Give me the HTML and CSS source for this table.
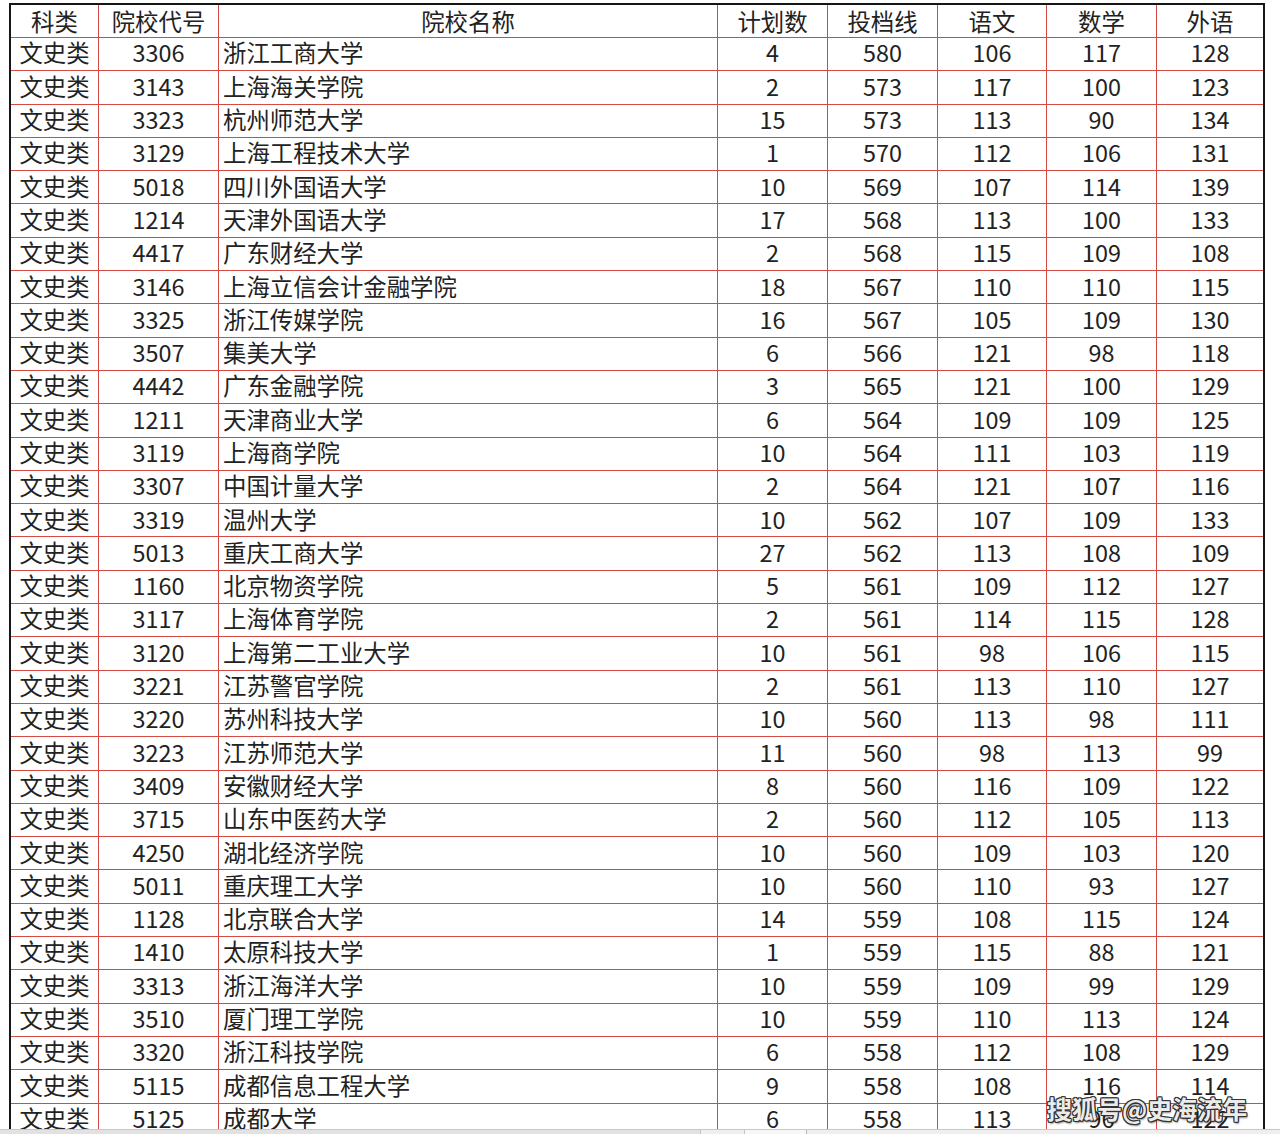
FILE: index.html
```html
<!DOCTYPE html>
<html lang="zh-CN">
<head>
<meta charset="utf-8">
<title>文史类 投档线</title>
<link rel="stylesheet" href="styles.css">
</head>
<body>
<div class="page">
  <div class="viewport">
    <div class="sheet">
      <div class="row head">
        <div class="c">科类</div><div class="c">院校代号</div><div class="c">院校名称</div><div class="c">计划数</div><div class="c">投档线</div><div class="c">语文</div><div class="c">数学</div><div class="c last">外语</div>
      </div>
      <div class="row"><div class="c">文史类</div><div class="c">3306</div><div class="c name">浙江工商大学</div><div class="c">4</div><div class="c">580</div><div class="c">106</div><div class="c">117</div><div class="c last">128</div></div>
      <div class="row"><div class="c">文史类</div><div class="c">3143</div><div class="c name">上海海关学院</div><div class="c">2</div><div class="c">573</div><div class="c">117</div><div class="c">100</div><div class="c last">123</div></div>
      <div class="row"><div class="c">文史类</div><div class="c">3323</div><div class="c name">杭州师范大学</div><div class="c">15</div><div class="c">573</div><div class="c">113</div><div class="c">90</div><div class="c last">134</div></div>
      <div class="row"><div class="c">文史类</div><div class="c">3129</div><div class="c name">上海工程技术大学</div><div class="c">1</div><div class="c">570</div><div class="c">112</div><div class="c">106</div><div class="c last">131</div></div>
      <div class="row"><div class="c">文史类</div><div class="c">5018</div><div class="c name">四川外国语大学</div><div class="c">10</div><div class="c">569</div><div class="c">107</div><div class="c">114</div><div class="c last">139</div></div>
      <div class="row"><div class="c">文史类</div><div class="c">1214</div><div class="c name">天津外国语大学</div><div class="c">17</div><div class="c">568</div><div class="c">113</div><div class="c">100</div><div class="c last">133</div></div>
      <div class="row"><div class="c">文史类</div><div class="c">4417</div><div class="c name">广东财经大学</div><div class="c">2</div><div class="c">568</div><div class="c">115</div><div class="c">109</div><div class="c last">108</div></div>
      <div class="row"><div class="c">文史类</div><div class="c">3146</div><div class="c name">上海立信会计金融学院</div><div class="c">18</div><div class="c">567</div><div class="c">110</div><div class="c">110</div><div class="c last">115</div></div>
      <div class="row"><div class="c">文史类</div><div class="c">3325</div><div class="c name">浙江传媒学院</div><div class="c">16</div><div class="c">567</div><div class="c">105</div><div class="c">109</div><div class="c last">130</div></div>
      <div class="row"><div class="c">文史类</div><div class="c">3507</div><div class="c name">集美大学</div><div class="c">6</div><div class="c">566</div><div class="c">121</div><div class="c">98</div><div class="c last">118</div></div>
      <div class="row"><div class="c">文史类</div><div class="c">4442</div><div class="c name">广东金融学院</div><div class="c">3</div><div class="c">565</div><div class="c">121</div><div class="c">100</div><div class="c last">129</div></div>
      <div class="row"><div class="c">文史类</div><div class="c">1211</div><div class="c name">天津商业大学</div><div class="c">6</div><div class="c">564</div><div class="c">109</div><div class="c">109</div><div class="c last">125</div></div>
      <div class="row"><div class="c">文史类</div><div class="c">3119</div><div class="c name">上海商学院</div><div class="c">10</div><div class="c">564</div><div class="c">111</div><div class="c">103</div><div class="c last">119</div></div>
      <div class="row"><div class="c">文史类</div><div class="c">3307</div><div class="c name">中国计量大学</div><div class="c">2</div><div class="c">564</div><div class="c">121</div><div class="c">107</div><div class="c last">116</div></div>
      <div class="row"><div class="c">文史类</div><div class="c">3319</div><div class="c name">温州大学</div><div class="c">10</div><div class="c">562</div><div class="c">107</div><div class="c">109</div><div class="c last">133</div></div>
      <div class="row"><div class="c">文史类</div><div class="c">5013</div><div class="c name">重庆工商大学</div><div class="c">27</div><div class="c">562</div><div class="c">113</div><div class="c">108</div><div class="c last">109</div></div>
      <div class="row"><div class="c">文史类</div><div class="c">1160</div><div class="c name">北京物资学院</div><div class="c">5</div><div class="c">561</div><div class="c">109</div><div class="c">112</div><div class="c last">127</div></div>
      <div class="row"><div class="c">文史类</div><div class="c">3117</div><div class="c name">上海体育学院</div><div class="c">2</div><div class="c">561</div><div class="c">114</div><div class="c">115</div><div class="c last">128</div></div>
      <div class="row"><div class="c">文史类</div><div class="c">3120</div><div class="c name">上海第二工业大学</div><div class="c">10</div><div class="c">561</div><div class="c">98</div><div class="c">106</div><div class="c last">115</div></div>
      <div class="row"><div class="c">文史类</div><div class="c">3221</div><div class="c name">江苏警官学院</div><div class="c">2</div><div class="c">561</div><div class="c">113</div><div class="c">110</div><div class="c last">127</div></div>
      <div class="row"><div class="c">文史类</div><div class="c">3220</div><div class="c name">苏州科技大学</div><div class="c">10</div><div class="c">560</div><div class="c">113</div><div class="c">98</div><div class="c last">111</div></div>
      <div class="row"><div class="c">文史类</div><div class="c">3223</div><div class="c name">江苏师范大学</div><div class="c">11</div><div class="c">560</div><div class="c">98</div><div class="c">113</div><div class="c last">99</div></div>
      <div class="row"><div class="c">文史类</div><div class="c">3409</div><div class="c name">安徽财经大学</div><div class="c">8</div><div class="c">560</div><div class="c">116</div><div class="c">109</div><div class="c last">122</div></div>
      <div class="row"><div class="c">文史类</div><div class="c">3715</div><div class="c name">山东中医药大学</div><div class="c">2</div><div class="c">560</div><div class="c">112</div><div class="c">105</div><div class="c last">113</div></div>
      <div class="row"><div class="c">文史类</div><div class="c">4250</div><div class="c name">湖北经济学院</div><div class="c">10</div><div class="c">560</div><div class="c">109</div><div class="c">103</div><div class="c last">120</div></div>
      <div class="row"><div class="c">文史类</div><div class="c">5011</div><div class="c name">重庆理工大学</div><div class="c">10</div><div class="c">560</div><div class="c">110</div><div class="c">93</div><div class="c last">127</div></div>
      <div class="row"><div class="c">文史类</div><div class="c">1128</div><div class="c name">北京联合大学</div><div class="c">14</div><div class="c">559</div><div class="c">108</div><div class="c">115</div><div class="c last">124</div></div>
      <div class="row"><div class="c">文史类</div><div class="c">1410</div><div class="c name">太原科技大学</div><div class="c">1</div><div class="c">559</div><div class="c">115</div><div class="c">88</div><div class="c last">121</div></div>
      <div class="row"><div class="c">文史类</div><div class="c">3313</div><div class="c name">浙江海洋大学</div><div class="c">10</div><div class="c">559</div><div class="c">109</div><div class="c">99</div><div class="c last">129</div></div>
      <div class="row"><div class="c">文史类</div><div class="c">3510</div><div class="c name">厦门理工学院</div><div class="c">10</div><div class="c">559</div><div class="c">110</div><div class="c">113</div><div class="c last">124</div></div>
      <div class="row"><div class="c">文史类</div><div class="c">3320</div><div class="c name">浙江科技学院</div><div class="c">6</div><div class="c">558</div><div class="c">112</div><div class="c">108</div><div class="c last">129</div></div>
      <div class="row"><div class="c">文史类</div><div class="c">5115</div><div class="c name">成都信息工程大学</div><div class="c">9</div><div class="c">558</div><div class="c">108</div><div class="c">116</div><div class="c last">114</div></div>
      <div class="row"><div class="c">文史类</div><div class="c">5125</div><div class="c name">成都大学</div><div class="c">6</div><div class="c">558</div><div class="c">113</div><div class="c">96</div><div class="c last">122</div></div>
    </div>
    <div class="watermark">搜狐号@史海流年</div>
  </div>
  <div class="strip">
    <div class="seg seg-a"></div>
    <div class="seg seg-b"></div>
    <div class="seg seg-c"></div>
    <div class="seg seg-d"></div>
  </div>
</div>
</body>
</html>
```

FILE: styles.css
```css
html, body {
  margin: 0;
  padding: 0;
  background: #ffffff;
}

.page {
  width: 1280px;
  height: 1134px;
  overflow: hidden;
  display: flex;
  flex-direction: column;
}

.viewport {
  position: relative;
  height: 1129px;
  overflow: hidden;
  padding: 3px 0 0 9px;
  box-sizing: border-box;
  flex: none;
}

.sheet {
  width: 1256px;
  box-sizing: border-box;
  border-top: 2px solid #161616;
  border-left: 2px solid #161616;
  border-right: 2px solid #161616;
  font-family: "Noto Sans CJK SC", "Noto Sans", sans-serif;
  font-size: 23.4px;
  color: #222222;
}

.row {
  display: grid;
  grid-template-columns: 88px 120px 499px 110px 110px 109px 110px 106px;
  height: 33.3px;
  box-sizing: border-box;
  border-bottom: 1px solid #d64a46;
}

.row.head {
  height: 33px;
}

.c {
  box-sizing: border-box;
  border-right: 1px solid #d64a46;
  display: flex;
  align-items: center;
  justify-content: center;
  line-height: 1;
  white-space: nowrap;
  padding-bottom: 2px;
}

.row.head .c {
  padding-bottom: 0;
  padding-top: 1px;
}

.c.last {
  border-right: none;
}

.c.name {
  justify-content: flex-start;
  padding-left: 4px;
}

.watermark {
  position: absolute;
  left: 1047px;
  top: 1090px;
  font-family: "Noto Sans CJK SC", sans-serif;
  font-weight: 700;
  font-size: 25px;
  letter-spacing: 0px;
  color: rgba(255, 255, 255, 0.92);
  text-shadow:
    1px 1px 0 #333, -1px -1px 0 #333, 1px -1px 0 #333, -1px 1px 0 #333,
    0 1px 0 #333, 0 -1px 0 #333, 1px 0 0 #333, -1px 0 0 #333,
    1px 2px 2px rgba(0,0,0,0.5);
}

.strip {
  flex: none;
  height: 5px;
  display: flex;
  background: #d9d9d9;
  border-top: 1px solid #c8c8c8;
  box-sizing: border-box;
}

.seg {
  height: 100%;
  box-sizing: border-box;
}

.seg-a {
  width: 700px;
  background: #e2e2e2;
}

.seg-b {
  width: 45px;
  background: #efefef;
  border-left: 1px solid #c4c4c4;
  border-right: 1px solid #c4c4c4;
}

.seg-c {
  width: 61px;
  background: #f7f7f7;
}

.seg-d {
  flex: 1;
  background: #efefef;
  border-left: 1px solid #b8b8b8;
}
```
